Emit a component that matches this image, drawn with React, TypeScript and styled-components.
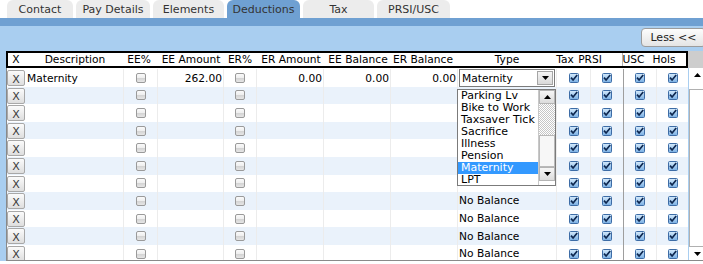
import React from 'react';
import styled, { createGlobalStyle } from 'styled-components';

const GlobalStyle = createGlobalStyle`
  html, body { margin: 0; padding: 0; background: #ffffff; overflow: hidden; }
  body { font-family: "DejaVu Sans", Verdana, sans-serif; color: #000; }
`;

const Page = styled.div`
  width: 703px;
  height: 264px;
  overflow: hidden;
`;

const TabStrip = styled.div`
  display: flex;
  gap: 3px;
  padding-left: 7px;
  height: 18px;
  align-items: flex-end;
`;

const Tab = styled.div<{ $w: number; $active?: boolean }>`
  width: ${p => p.$w}px;
  height: 18px;
  box-sizing: border-box;
  border-radius: 6px 6px 0 0;
  background: ${p => (p.$active ? '#6fa0d2' : '#ececec')};
  color: #333;
  font-size: 11px;
  display: flex;
  align-items: center;
  justify-content: center;
  padding-top: 1px;
`;

const Band = styled.div`
  height: 8px;
  background: #6fa0d2;
`;

const Panel = styled.div`
  background: #a9cef0;
  padding-left: 6px;
`;

const Toolbar = styled.div`
  height: 25px;
  box-sizing: border-box;
  padding-top: 2px;
  display: flex;
  justify-content: flex-end;
  align-items: flex-start;
`;

const LessButton = styled.button`
  width: 65px;
  height: 19px;
  margin-right: -3px;
  box-sizing: border-box;
  border: 1px solid #9c9c9c;
  border-radius: 4px;
  background: linear-gradient(#fdfdfd, #e4e4e4);
  font-family: "DejaVu Sans", Verdana, sans-serif;
  font-size: 11px;
  color: #222;
  padding: 0;
  display: flex;
  align-items: center;
  justify-content: center;
`;

const HeaderRow = styled.div`
  display: flex;
  height: 17px;
`;

const HeaderBox = styled.div`
  width: 682px;
  height: 17px;
  box-sizing: border-box;
  border: 2px solid #000;
  background: #fff;
  display: grid;
  grid-template-columns: 16px 102px 26px 78px 20px 82px 52px 78px 90px 26px 24px 20px 22px 40px 2px;
`;

const HeaderCell = styled.div<{ $sep?: boolean }>`
  display: flex;
  align-items: center;
  justify-content: center;
  white-space: nowrap;
  font-size: 10.67px;
  line-height: 13px;
  min-width: 0;
  border-left: ${p => (p.$sep ? '1px solid #b5b5b5' : 'none')};
`;

const HeaderFiller = styled.div`
  flex: 1;
  background: #cdcdcd;
`;

const Body = styled.div`
  display: flex;
  height: 193px;
  box-sizing: border-box;
  border-left: 1px solid #8a8a8a;
  border-bottom: 1px solid #8a8a8a;
`;

const RowsArea = styled.div`
  width: 681px;
  padding-top: 1px;
  box-sizing: border-box;
  background: #fff;
  overflow: hidden;
  flex-shrink: 0;
`;

const Row = styled.div<{ $alt: boolean }>`
  display: grid;
  grid-template-columns: 19px 97px 34px 66px 33px 67px 67px 67px 99px 34px 33px 33px 32px;
  height: 17.6px;
  background: ${p => (p.$alt ? '#eaf2fb' : '#ffffff')};
`;

const Cell = styled.div<{ $align?: 'start' | 'center' | 'end'; $line?: 'none' | 'light' | 'dark'; $anchor?: boolean }>`
  display: flex;
  align-items: center;
  justify-content: ${p => (p.$align === 'end' ? 'flex-end' : p.$align === 'center' ? 'center' : 'flex-start')};
  box-sizing: border-box;
  padding: 0 1px;
  white-space: nowrap;
  min-width: 0;
  font-size: 10.67px;
  position: ${p => (p.$anchor ? 'relative' : 'static')};
  border-left: ${p =>
    p.$line === 'dark' ? '1px solid #9e9e9e' : p.$line === 'light' ? '1px solid #ececec' : 'none'};
`;

const XCell = styled.div`
  display: flex;
  align-items: flex-start;
`;

const XButton = styled.button`
  width: 18px;
  height: 16px;
  margin-top: 1px;
  box-sizing: border-box;
  border: 1px solid #a8a8a8;
  border-radius: 2px;
  background: linear-gradient(#fbfbfb, #dedede);
  font-family: "DejaVu Sans", Verdana, sans-serif;
  font-size: 11px;
  color: #3a3a3a;
  padding: 0;
  padding-top: 2px;
  display: flex;
  align-items: center;
  justify-content: center;
  line-height: 1;
`;

const BoxOff = styled.span`
  width: 10px;
  height: 10px;
  box-sizing: border-box;
  border: 1px solid #9a9a9a;
  border-radius: 2px;
  background: linear-gradient(#fafafa 0%, #efefef 45%, #d3d3d3 52%, #e6e6e6 100%);
`;

const SelectBox = styled.div`
  width: 97px;
  height: 18px;
  box-sizing: border-box;
  border: 1px solid #7b7b7b;
  background: #fff;
  display: flex;
  align-items: center;
  justify-content: space-between;
  padding-left: 2px;
  font-size: 10.67px;
  align-self: flex-start;
`;

const SelectArrow = styled.span`
  width: 16px;
  height: 14px;
  margin-right: 1px;
  box-sizing: border-box;
  border: 1px solid #a5a5a5;
  background: linear-gradient(#f4f4f4, #d9d9d9);
  display: flex;
  align-items: center;
  justify-content: center;
`;

const ListBox = styled.div`
  position: absolute;
  top: 20px;
  left: -1px;
  width: 99px;
  height: 97px;
  box-sizing: border-box;
  border: 1px solid #7b7b7b;
  background: #fff;
  display: flex;
  z-index: 10;
`;

const ListItems = styled.div`
  flex: 1;
  overflow: hidden;
  display: flex;
  flex-direction: column;
`;

const ListItem = styled.div<{ $sel?: boolean }>`
  height: 12px;
  line-height: 12px;
  padding-left: 3px;
  font-size: 11px;
  white-space: nowrap;
  background: ${p => (p.$sel ? '#3399ff' : 'transparent')};
  color: ${p => (p.$sel ? '#ffffff' : '#000000')};
`;

const ListScroll = styled.div`
  width: 16px;
  display: flex;
  flex-direction: column;
  border-left: 1px solid #c8c8c8;
`;

const ScrollBtn = styled.div<{ $h: number }>`
  height: ${p => p.$h}px;
  box-sizing: border-box;
  border: 1px solid #b4b4b4;
  background: linear-gradient(#f6f6f6, #dcdcdc);
  display: flex;
  align-items: center;
  justify-content: center;
`;

const CheckerTrack = styled.div<{ $h: number }>`
  height: ${p => p.$h}px;
  background: repeating-conic-gradient(#c6c6c6 0 25%, #ffffff 0 50%) 0 0 / 2px 2px;
`;

const Thumb = styled.div<{ $h?: number }>`
  height: ${p => (p.$h ? `${p.$h}px` : 'auto')};
  flex: ${p => (p.$h ? '0 0 auto' : '1')};
  box-sizing: border-box;
  border: 1px solid #b9b9b9;
  background: #f7f7f7;
`;

const MainScroll = styled.div`
  width: 17px;
  margin-left: 1px;
  flex-shrink: 0;
  display: flex;
  flex-direction: column;
  background: #fff;
`;

const MainScrollBtn = styled.div<{ $h: number }>`
  height: ${p => p.$h}px;
  display: flex;
  align-items: center;
  justify-content: center;
  background: #fff;
`;

const MainThumb = styled.div`
  flex: 1;
  margin-top: 7px;
  border-left: 1px solid #b0b0b0;
  border-top: 1px solid #b0b0b0;
  border-bottom: 1px solid #b0b0b0;
  background: #fff;
`;

const Tri = ({ up }: { up?: boolean }) => (
  <svg width="7" height="4" viewBox="0 0 7 4">
    <path d={up ? 'M0 4 L3.5 0 L7 4 Z' : 'M0 0 L7 0 L3.5 4 Z'} fill="#000" />
  </svg>
);

const BoxOn = () => (
  <svg width="10" height="10" viewBox="0 0 10 10">
    <defs>
      <linearGradient id="cbOn" x1="0" y1="0" x2="0" y2="1">
        <stop offset="0" stopColor="#d6ebfc" />
        <stop offset="1" stopColor="#78aee3" />
      </linearGradient>
    </defs>
    <rect x="0.5" y="0.5" width="9" height="9" rx="1" fill="url(#cbOn)" stroke="#3d6ca6" />
    <path d="M2 4.6 L4.1 7 L8.2 2" fill="none" stroke="#0e2850" strokeWidth="1.7" />
  </svg>
);

const tabs = [
  { label: 'Contact', w: 66 },
  { label: 'Pay Details', w: 74 },
  { label: 'Elements', w: 71 },
  { label: 'Deductions', w: 73, active: true },
  { label: 'Tax', w: 71 },
  { label: 'PRSI/USC', w: 73 },
];

const headers: { label: string; sep?: boolean }[] = [
  { label: 'X' },
  { label: 'Description' },
  { label: 'EE%' },
  { label: 'EE Amount' },
  { label: 'ER%' },
  { label: 'ER Amount' },
  { label: 'EE Balance' },
  { label: 'ER Balance' },
  { label: 'Type' },
  { label: 'Tax' },
  { label: 'PRSI' },
  { label: '' },
  { label: 'USC', sep: true },
  { label: 'Hols' },
  { label: '' },
];

const listOptions = ['Parking Lv', 'Bike to Work', 'Taxsaver Tick', 'Sacrifice', 'Illness', 'Pension', 'Maternity', 'LPT'];

type RowData = {
  desc: string;
  ee: string;
  er: string;
  eeb: string;
  erb: string;
  type: string;
};

const rows: RowData[] = Array.from({ length: 11 }, (_, i) => ({
  desc: i === 0 ? 'Maternity' : '',
  ee: i === 0 ? '262.00' : '',
  er: i === 0 ? '0.00' : '',
  eeb: i === 0 ? '0.00' : '',
  erb: i === 0 ? '0.00' : '',
  type: i >= 7 ? 'No Balance' : '',
}));

export default function App() {
  return (
    <Page>
      <GlobalStyle />
      <TabStrip>
        {tabs.map(t => (
          <Tab key={t.label} $w={t.w} $active={t.active}>
            {t.label}
          </Tab>
        ))}
      </TabStrip>
      <Band />
      <Panel>
        <Toolbar>
          <LessButton>Less &lt;&lt;</LessButton>
        </Toolbar>
        <HeaderRow>
          <HeaderBox>
            {headers.map((h, i) => (
              <HeaderCell key={i} $sep={h.sep}>
                {h.label}
              </HeaderCell>
            ))}
          </HeaderBox>
          <HeaderFiller />
        </HeaderRow>
        <Body>
          <RowsArea>
            {rows.map((r, i) => (
              <Row key={i} $alt={i % 2 === 1}>
                <XCell>
                  <XButton>X</XButton>
                </XCell>
                <Cell>{r.desc}</Cell>
                <Cell $align="center" $line="light">
                  <BoxOff />
                </Cell>
                <Cell $align="end" $line="light">{r.ee}</Cell>
                <Cell $align="center" $line="light">
                  <BoxOff />
                </Cell>
                <Cell $align="end" $line="light">{r.er}</Cell>
                <Cell $align="end" $line="light">{r.eeb}</Cell>
                <Cell $align="end" $line="light">{r.erb}</Cell>
                <Cell $line="light" $anchor={i === 0}>
                  {i === 0 ? (
                    <>
                      <SelectBox>
                        Maternity
                        <SelectArrow>
                          <Tri />
                        </SelectArrow>
                      </SelectBox>
                      <ListBox>
                        <ListItems>
                          {listOptions.map(o => (
                            <ListItem key={o} $sel={o === 'Maternity'}>
                              {o}
                            </ListItem>
                          ))}
                        </ListItems>
                        <ListScroll>
                          <ScrollBtn $h={14}>
                            <Tri up />
                          </ScrollBtn>
                          <CheckerTrack $h={31} />
                          <Thumb $h={32} />
                          <ScrollBtn $h={14}>
                            <Tri />
                          </ScrollBtn>
                        </ListScroll>
                      </ListBox>
                    </>
                  ) : (
                    r.type
                  )}
                </Cell>
                <Cell $align="center" $line="light">
                  <BoxOn />
                </Cell>
                <Cell $align="center" $line="light">
                  <BoxOn />
                </Cell>
                <Cell $align="center" $line="dark">
                  <BoxOn />
                </Cell>
                <Cell $align="center" $line="light">
                  <BoxOn />
                </Cell>
              </Row>
            ))}
          </RowsArea>
          <MainScroll>
            <MainScrollBtn $h={14}>
              <Tri up />
            </MainScrollBtn>
            <MainThumb />
            <MainScrollBtn $h={13}>
              <Tri />
            </MainScrollBtn>
          </MainScroll>
        </Body>
      </Panel>
    </Page>
  );
}
